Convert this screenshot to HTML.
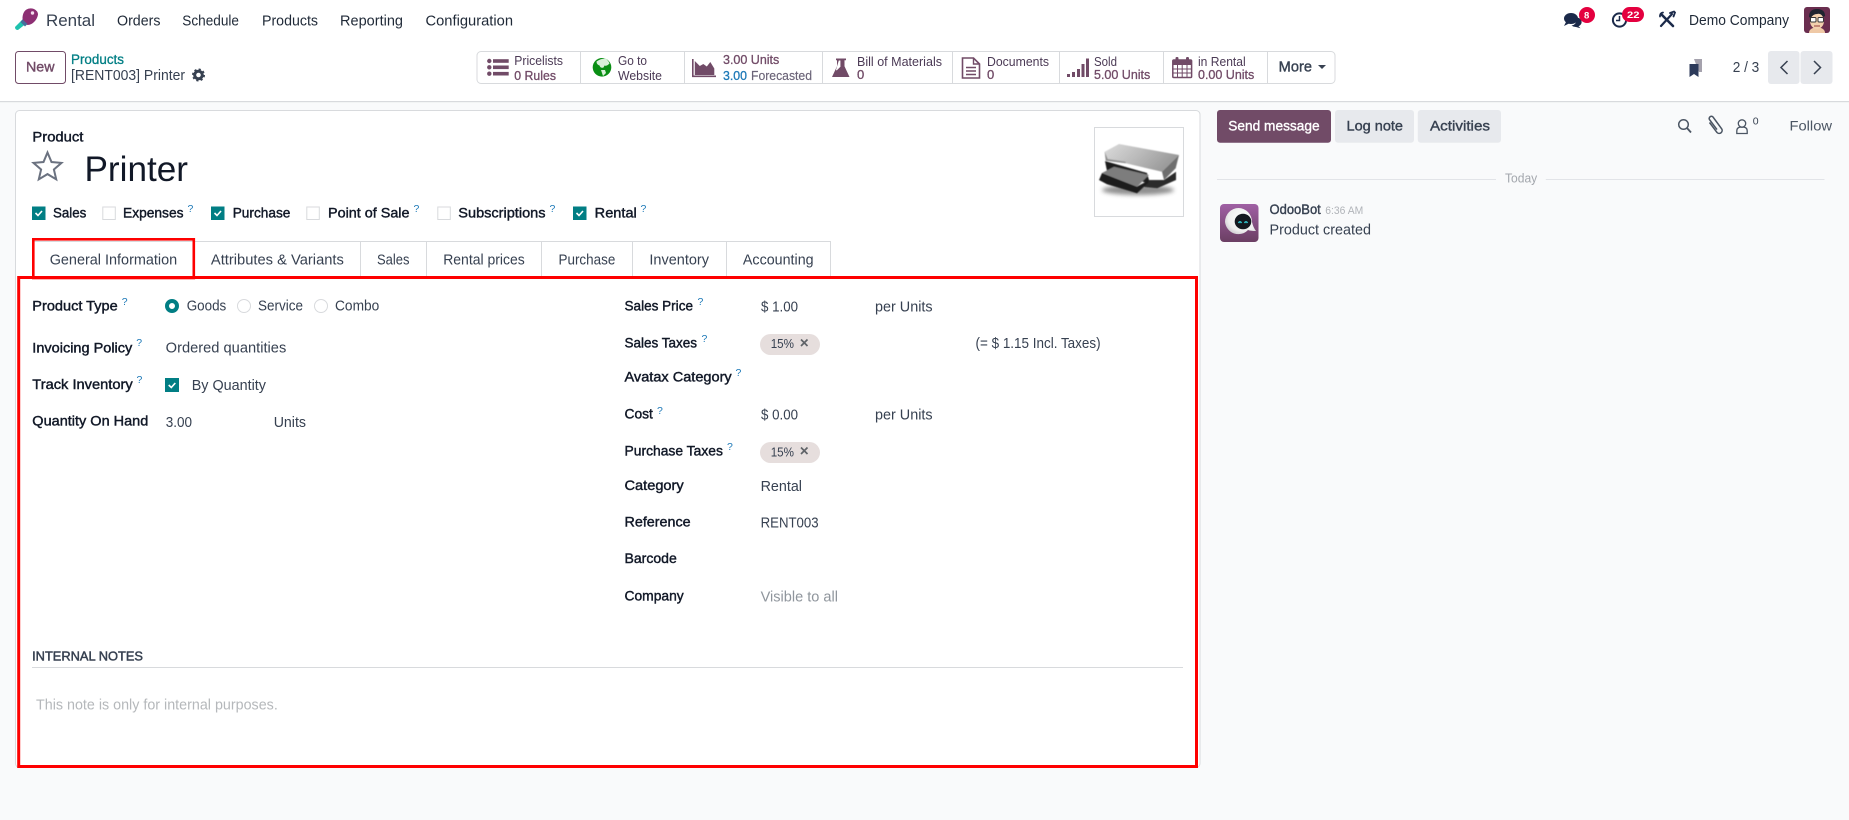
<!DOCTYPE html>
<html lang="en"><head><meta charset="utf-8"><title>Printer</title>
<style>
html,body{margin:0;padding:0;width:1849px;height:820px;overflow:hidden;background:#f9fafb}
svg{display:block}
text{font-family:"Liberation Sans",sans-serif;font-size:14.5px;fill:#374151;white-space:pre}
.n{fill:#1f2937;font-size:14.5px}
.m{fill:currentColor;stroke:currentColor;stroke-width:.38px;font-size:14px}
.b{fill:#111827;stroke:#111827;stroke-width:.42px;font-size:14px}
.s{font-size:13px;fill:#4b3a55}
.sb{font-size:13px;fill:#714b67;stroke:#714b67;stroke-width:.3px}
.q{font-size:10.5px;fill:#1f7ab8}
.g{fill:#8f959c}
.tab{font-size:14.5px;fill:#374151}
</style></head><body>
<svg width="1849" height="820" viewBox="0 0 1849 820" xmlns="http://www.w3.org/2000/svg">
<defs>
<linearGradient id="silver" x1="0" y1="0" x2="1" y2="0.4"><stop offset="0" stop-color="#dcdcdc"/><stop offset=".5" stop-color="#bcbcbc"/><stop offset="1" stop-color="#9a9a9a"/></linearGradient>
<linearGradient id="bot" x1="0" y1="0" x2="0" y2="1"><stop offset="0" stop-color="#a060a4"/><stop offset="1" stop-color="#6b3f63"/></linearGradient>
<radialGradient id="ball" cx=".6" cy=".4" r=".7"><stop offset="0" stop-color="#fff"/><stop offset=".7" stop-color="#eeeeee"/><stop offset="1" stop-color="#c9c5cc"/></radialGradient>
<filter id="blur" x="-30%" y="-80%" width="160%" height="260%"><feGaussianBlur stdDeviation="2.2"/></filter>
<filter id="soft" x="-5%" y="-5%" width="110%" height="110%"><feGaussianBlur stdDeviation=".45"/></filter>
</defs>
<rect width="1849" height="820" fill="#f9fafb"/>
<rect width="1849" height="101" fill="#fff"/>
<rect y="101" width="1849" height="1.2" fill="#d8dadd"/>

<!-- logo -->
<path d="M15 27 L23.500 18.500 L27.500 22.500 L18 30 Q15 30 15 27Z" fill="#1fc2ae"/>
<path d="M26.500 9.500 Q30 7.500 34 9 Q38 11 38 14.500 Q37.500 18 35 21 Q31.500 25 27.500 25 Q24.500 24 23 21 Q22 18 23 14.500 Q24 11 26.500 9.500Z" fill="#8d2f73"/>
<circle cx="32.500" cy="13" r="1.700" fill="#f3dcec"/>
<path d="M22.500 19.500 L27.500 24 L25 26.500 L20.500 22Z" fill="#456e9c"/>
<!-- nav -->
<text x="46" y="26" style="font-size:17px" textLength="49" lengthAdjust="spacingAndGlyphs">Rental</text>
<text class="n" x="117" y="25.300" textLength="43.500" lengthAdjust="spacingAndGlyphs">Orders</text>
<text class="n" x="182.300" y="25.300" textLength="56.700" lengthAdjust="spacingAndGlyphs">Schedule</text>
<text class="n" x="262" y="25.300" textLength="56" lengthAdjust="spacingAndGlyphs">Products</text>
<text class="n" x="340" y="25.300" textLength="63" lengthAdjust="spacingAndGlyphs">Reporting</text>
<text class="n" x="425.500" y="25.300" textLength="87.500" lengthAdjust="spacingAndGlyphs">Configuration</text>

<!-- right top -->
<g fill="#1b2a4a">
<ellipse cx="1571" cy="18.500" rx="7" ry="5.500"/><path d="M1566 22 l-2 4 5-2.500z"/>
<path d="M1577 17.500 a5.500 4.600 0 0 1 1.500 8.700 l2 2 -4.500-1.200 a6 5 0 0 1 -4.500-1.500 q5-.5 5.500-8z"/>
</g>
<circle cx="1587" cy="15" r="8" fill="#e4003f"/>
<text x="1584" y="18.500" style="font-size:9.500px;font-weight:700;fill:#fff">8</text>
<circle cx="1619.500" cy="20" r="6.600" fill="none" stroke="#1b2a4a" stroke-width="2"/>
<path d="M1619.500 16v4.500h-3.500" fill="none" stroke="#1b2a4a" stroke-width="1.500"/>
<rect x="1622" y="7" width="22" height="15" rx="7.500" fill="#e4003f"/>
<text x="1627" y="18" textLength="12.500" lengthAdjust="spacingAndGlyphs" style="font-size:9.500px;font-weight:700;fill:#fff">22</text>
<g stroke="#1b2a4a" stroke-linecap="round" fill="none">
<path d="M1661 26l11-12" stroke-width="2.200"/>
<path d="M1661 14l12 12" stroke-width="2.600"/>
<path d="M1660 16.500a3.500 3.500 0 0 1 3-4" stroke-width="1.800"/>
<path d="M1670 13l4-1.500 1 1-1.500 4" stroke-width="1.800"/>
</g>
<text class="n" x="1689" y="25" textLength="100" lengthAdjust="spacingAndGlyphs">Demo Company</text>
<rect x="1804" y="7" width="26" height="26" rx="3" fill="#6a2e4f"/>
<path d="M1809 33 q0-5 8-6 q8 1 8 6z" fill="#efc9a6"/>
<ellipse cx="1817" cy="21" rx="7" ry="8" fill="#f2d0ae"/>
<path d="M1809 17 q0-8 8-8 q8 0 8 7 l-2 1 q-2-4-6-3 q-4 0-6 4z" fill="#1f2430"/>
<rect x="1810.500" y="17.500" width="5.500" height="4.500" rx="1" fill="#fff" stroke="#333" stroke-width="1"/>
<rect x="1818" y="17.500" width="5.500" height="4.500" rx="1" fill="#fff" stroke="#333" stroke-width="1"/>
<path d="M1814 26h6" stroke="#a5574f" stroke-width="1.200"/>

<!-- control panel left -->
<rect x="15.500" y="51.500" width="50" height="32" rx="3" fill="#fff" stroke="#714b67" stroke-width="1"/>
<text class="m" x="26" y="71.500" textLength="28.500" lengthAdjust="spacingAndGlyphs" style="color:#714b67">New</text>
<text class="m" x="71" y="64" textLength="53" lengthAdjust="spacingAndGlyphs" style="color:#017e84;font-size:13.500px;stroke-width:.3px">Products</text>
<text x="71" y="80" textLength="114" lengthAdjust="spacingAndGlyphs">[RENT003] Printer</text>
<circle cx="198.500" cy="75" r="3.800" fill="none" stroke="#374151" stroke-width="3"/>
<circle cx="198.500" cy="75" r="5.700" fill="none" stroke="#374151" stroke-width="1.600" stroke-dasharray="2.200 2.270"/>

<!-- stat bar -->
<rect x="477" y="51.500" width="858" height="32" rx="4" fill="#fff" stroke="#d8dadd"/>
<path d="M580.500 52v31M684.500 52v31M822.500 52v31M952.500 52v31M1059.500 52v31M1163.500 52v31M1267.500 52v31" stroke="#d8dadd"/>
<!-- pricelist -->
<g fill="#714b67"><circle cx="489.300" cy="61" r="2.200"/><circle cx="489.300" cy="67.300" r="2.200"/><circle cx="489.300" cy="73.700" r="2.200"/>
<rect x="493" y="59.200" width="15.700" height="3.600"/><rect x="493" y="65.500" width="15.700" height="3.600"/><rect x="493" y="71.900" width="15.700" height="3.600"/></g>
<text class="s" x="514.300" y="65" textLength="48.700" lengthAdjust="spacingAndGlyphs">Pricelists</text>
<text class="sb" x="514.300" y="80" textLength="41.700" lengthAdjust="spacingAndGlyphs">0 Rules</text>
<!-- globe -->
<circle cx="602" cy="67.300" r="9.300" fill="#0a8f14"/>
<path d="M596.500 61.500 q4-3 9-3 q3 2 4 5 q-3 3-5 2 l-1 2 q-3 1-4-2 q-3-1-3-4z M601 70 l4 0 l1 3 l-3 3 z" fill="#d8f0d8"/>
<text class="s" x="618" y="65" textLength="29" lengthAdjust="spacingAndGlyphs">Go to</text>
<text class="s" x="618" y="80" textLength="44" lengthAdjust="spacingAndGlyphs">Website</text>
<!-- chart -->
<path d="M692.800 59v17.300h23.200" fill="none" stroke="#714b67" stroke-width="1.600"/>
<path d="M694.800 75v-14l5 5 3.500-2 3.500 2.500 3.500-4.500 4 6.500v6.500z" fill="#714b67"/>
<text class="sb" x="723" y="64" textLength="56.300" lengthAdjust="spacingAndGlyphs">3.00 Units</text>
<text class="m" x="723" y="80" textLength="24" lengthAdjust="spacingAndGlyphs" style="color:#1f7ab8;font-size:13px;stroke-width:.3px">3.00</text>
<text class="m" x="751" y="80" textLength="61" lengthAdjust="spacingAndGlyphs" style="color:#6b6478;font-size:13px;stroke-width:.15px">Forecasted</text>
<!-- flask -->
<path d="M836 58.500h10v1.800h-1.500v6l5 10.700h-17.500l5-10.700v-6h-1z" fill="#714b67"/>
<path d="M838.800 60.500h1.600v6.300l-3.500 3.500h-1z" fill="#fff"/>
<text class="s" x="857" y="66" textLength="85" lengthAdjust="spacingAndGlyphs">Bill of Materials</text>
<text class="sb" x="857" y="79">0</text>
<!-- doc -->
<path d="M962.500 58h11l6 6v14h-17z" fill="none" stroke="#714b67" stroke-width="1.600"/>
<path d="M973.500 58v6h6M966 67.500h10M966 71h10M966 74.500h10" fill="none" stroke="#714b67" stroke-width="1.400"/>
<text class="s" x="987" y="66" textLength="62" lengthAdjust="spacingAndGlyphs">Documents</text>
<text class="sb" x="987" y="79">0</text>
<!-- signal -->
<g fill="#714b67"><rect x="1067" y="74" width="3" height="3"/><rect x="1072" y="72" width="3" height="5"/><rect x="1077" y="69" width="3" height="8"/><rect x="1081.500" y="64" width="3" height="13"/><rect x="1086" y="58.500" width="3" height="18.500"/></g>
<text class="s" x="1094" y="66" textLength="23" lengthAdjust="spacingAndGlyphs">Sold</text>
<text class="sb" x="1094" y="79" textLength="56.300" lengthAdjust="spacingAndGlyphs">5.00 Units</text>
<!-- calendar -->
<rect x="1172.800" y="60" width="18.800" height="17.500" rx="1" fill="none" stroke="#714b67" stroke-width="1.500"/>
<rect x="1172.800" y="60" width="18.800" height="5" fill="#714b67"/>
<rect x="1175.500" y="57" width="3" height="5.500" rx="1.200" fill="#714b67"/><rect x="1186" y="57" width="3" height="5.500" rx="1.200" fill="#714b67"/>
<path d="M1177.500 65v12M1182.200 65v12M1187 65v12M1173 69h18.500M1173 73h18.500" stroke="#714b67" stroke-width="1"/>
<text class="s" x="1198" y="66" textLength="47.700" lengthAdjust="spacingAndGlyphs">in Rental</text>
<text class="sb" x="1198" y="79" textLength="56.300" lengthAdjust="spacingAndGlyphs">0.00 Units</text>
<!-- more -->
<text class="m" x="1278.700" y="71.700" textLength="33.300" lengthAdjust="spacingAndGlyphs" style="color:#374151;font-size:14.500px">More</text>
<path d="M1318 65h8l-4 4z" fill="#374151"/>

<!-- bookmark + pager -->
<path d="M1694 59h8v13h-3z" fill="#a5a2ad"/>
<path d="M1689.500 64h9v13l-4.500-3-4.500 3z" fill="#2c3a5a"/>
<text x="1732.700" y="72" textLength="26.600" lengthAdjust="spacingAndGlyphs">2 / 3</text>
<rect x="1768" y="51" width="31.500" height="33" rx="3" fill="#e7e9ed"/>
<rect x="1800.500" y="51" width="32" height="33" rx="3" fill="#e7e9ed"/>
<path d="M1787.500 61l-6.500 6.500 6.500 6.500M1814 61l6.500 6.500-6.500 6.500" fill="none" stroke="#374151" stroke-width="1.500"/>

<!-- card -->
<rect x="15.500" y="110.500" width="1184.500" height="657" rx="4" fill="#fff" stroke="#d8dadd"/>
<text class="b" x="32.400" y="141.700" textLength="51" lengthAdjust="spacingAndGlyphs">Product</text>
<path d="M47.500 152.500l4 9.500 10 .9-7.600 6.600 2.300 9.800-8.700-5.200-8.700 5.200 2.300-9.800-7.600-6.600 10-.9z" fill="none" stroke="#6b7280" stroke-width="2"/>
<text x="84.500" y="181" textLength="103.500" lengthAdjust="spacingAndGlyphs" style="font-size:35px;fill:#111827">Printer</text>

<!-- image -->
<rect x="1094.500" y="127.500" width="89" height="89" fill="#fff" stroke="#d8dadd"/>
<ellipse cx="1138" cy="190" rx="36" ry="5" fill="#444" opacity=".6" filter="url(#blur)"/>
<g filter="url(#soft)">
<path d="M1149 180l15 0 12-8.300v8.300l-18.700 8.300-13.300-1.300z" fill="#2b2b2b"/>
<path d="M1105 161l42 12 2 7-2 3-40-12z" fill="#1c1c1c"/>
<path d="M1102 173l12-6.300 35 8.300-12 11.700z" fill="#7d7d7d"/>
<path d="M1099 180l3-7 35 13.700 12-6.700-1 3-11 10.300-30-9z" fill="#1f1f1f"/>
<path d="M1104.700 151.700l14.300-7.700 60 11-17 16.700-36.300-8.400-20-2.600z" fill="url(#silver)"/>
<path d="M1162 171.700l17-16.700-3.300 13.300-11.700 11.700z" fill="#6e6e6e"/>
<path d="M1104.700 151.700l1 9 20 2.600 0-1.500-18-2.800z" fill="#8f8f8f"/>
</g>

<!-- check row -->
<rect x="32" y="206.500" width="13.500" height="13.500" fill="#017e84"/><path d="M35.500 213l2.500 2.500 4-4.500" fill="none" stroke="#fff" stroke-width="1.600"/>
<text class="b" x="53" y="217.700" textLength="33.300" lengthAdjust="spacingAndGlyphs">Sales</text>
<rect x="102.800" y="207" width="12.500" height="12.500" fill="#fff" stroke="#d8dadd"/>
<text class="b" x="123" y="217.700" textLength="60.500" lengthAdjust="spacingAndGlyphs">Expenses</text><text class="q" x="187.500" y="212">?</text>
<rect x="211" y="206.500" width="13.500" height="13.500" fill="#017e84"/><path d="M214.500 213l2.500 2.500 4-4.500" fill="none" stroke="#fff" stroke-width="1.600"/>
<text class="b" x="232.700" y="217.700" textLength="57.700" lengthAdjust="spacingAndGlyphs">Purchase</text>
<rect x="306.800" y="207" width="12.500" height="12.500" fill="#fff" stroke="#d8dadd"/>
<text class="b" x="328" y="217.700" textLength="81.500" lengthAdjust="spacingAndGlyphs">Point of Sale</text><text class="q" x="413.500" y="212">?</text>
<rect x="437.800" y="207" width="12.500" height="12.500" fill="#fff" stroke="#d8dadd"/>
<text class="b" x="458.300" y="217.700" textLength="87.200" lengthAdjust="spacingAndGlyphs">Subscriptions</text><text class="q" x="549.500" y="212">?</text>
<rect x="573" y="206.500" width="13.500" height="13.500" fill="#017e84"/><path d="M576.500 213l2.500 2.500 4-4.500" fill="none" stroke="#fff" stroke-width="1.600"/>
<text class="b" x="594.700" y="217.700" textLength="42.100" lengthAdjust="spacingAndGlyphs">Rental</text><text class="q" x="640.500" y="212">?</text>

<!-- tabs -->
<path d="M33.500 276.500V241.500H830.500V276.500M360.500 241.500v35M426.500 241.500v35M541.500 241.500v35M632.500 241.500v35M726.500 241.500v35M194.500 241.500v35" fill="none" stroke="#d8dadd"/>
<text class="tab" x="49.700" y="264.300" textLength="127.500" lengthAdjust="spacingAndGlyphs">General Information</text>
<text class="tab" x="210.900" y="264.300" textLength="133" lengthAdjust="spacingAndGlyphs">Attributes &amp; Variants</text>
<text class="tab" x="377" y="264.300" textLength="32.500" lengthAdjust="spacingAndGlyphs">Sales</text>
<text class="tab" x="443.200" y="264.300" textLength="81.600" lengthAdjust="spacingAndGlyphs">Rental prices</text>
<text class="tab" x="558.500" y="264.300" textLength="56.800" lengthAdjust="spacingAndGlyphs">Purchase</text>
<text class="tab" x="649.400" y="264.300" textLength="59.600" lengthAdjust="spacingAndGlyphs">Inventory</text>
<text class="tab" x="742.900" y="264.300" textLength="70.700" lengthAdjust="spacingAndGlyphs">Accounting</text>

<!-- left group -->
<text class="b" x="32.300" y="310.700" textLength="85.400" lengthAdjust="spacingAndGlyphs">Product Type</text><text class="q" x="121.800" y="305">?</text>
<circle cx="172" cy="306" r="5" fill="#fff" stroke="#017e84" stroke-width="4"/>
<text x="186.700" y="310.700" textLength="39.600" lengthAdjust="spacingAndGlyphs">Goods</text>
<circle cx="244" cy="306" r="6.500" fill="#fff" stroke="#d8dadd"/>
<text x="258" y="310.700" textLength="45" lengthAdjust="spacingAndGlyphs">Service</text>
<circle cx="321" cy="306" r="6.500" fill="#fff" stroke="#d8dadd"/>
<text x="335" y="310.700" textLength="44.300" lengthAdjust="spacingAndGlyphs">Combo</text>

<text class="b" x="32.300" y="352.300" textLength="100" lengthAdjust="spacingAndGlyphs">Invoicing Policy</text><text class="q" x="136.200" y="346">?</text>
<text x="165.700" y="352.700" textLength="120.600" lengthAdjust="spacingAndGlyphs">Ordered quantities</text>

<text class="b" x="32.300" y="389" textLength="100.400" lengthAdjust="spacingAndGlyphs">Track Inventory</text><text class="q" x="136.500" y="383">?</text>
<rect x="165" y="378" width="14" height="14" fill="#017e84"/><path d="M168.700 385l2.600 2.500 4-4.500" fill="none" stroke="#fff" stroke-width="1.600"/>
<text x="191.700" y="390" textLength="74.300" lengthAdjust="spacingAndGlyphs">By Quantity</text>

<text class="b" x="32.300" y="425.700" textLength="116" lengthAdjust="spacingAndGlyphs">Quantity On Hand</text>
<text x="165.700" y="427" textLength="26.300" lengthAdjust="spacingAndGlyphs">3.00</text>
<text x="273.700" y="427" textLength="32.300" lengthAdjust="spacingAndGlyphs">Units</text>

<!-- right group -->
<text class="b" x="624.500" y="310.700" textLength="68.500" lengthAdjust="spacingAndGlyphs">Sales Price</text><text class="q" x="697.500" y="305">?</text>
<text x="761" y="311.700" textLength="37" lengthAdjust="spacingAndGlyphs">$ 1.00</text>
<text x="875" y="311.700" textLength="57.600" lengthAdjust="spacingAndGlyphs">per Units</text>

<text class="b" x="624.500" y="347.700" textLength="72.500" lengthAdjust="spacingAndGlyphs">Sales Taxes</text><text class="q" x="701.500" y="342">?</text>
<rect x="760" y="334" width="60" height="21" rx="10.500" fill="#e6dedd"/>
<text x="770.700" y="348" textLength="23.300" lengthAdjust="spacingAndGlyphs" style="font-size:13px">15%</text>
<path d="M801 339.500l6.500 6.500M807.500 339.500l-6.500 6.500" stroke="#5f6368" stroke-width="1.700"/>
<text x="975.500" y="348" textLength="125.100" lengthAdjust="spacingAndGlyphs">(= $ 1.15 Incl. Taxes)</text>

<text class="b" x="624.500" y="381.700" textLength="107.200" lengthAdjust="spacingAndGlyphs">Avatax Category</text><text class="q" x="735.500" y="376">?</text>

<text class="b" x="624.500" y="418.700" textLength="28.400" lengthAdjust="spacingAndGlyphs">Cost</text><text class="q" x="657" y="414">?</text>
<text x="761" y="419.700" textLength="37" lengthAdjust="spacingAndGlyphs">$ 0.00</text>
<text x="875" y="419.700" textLength="57.600" lengthAdjust="spacingAndGlyphs">per Units</text>

<text class="b" x="624.500" y="455.700" textLength="98.400" lengthAdjust="spacingAndGlyphs">Purchase Taxes</text><text class="q" x="727" y="450">?</text>
<rect x="760" y="442" width="60" height="21" rx="10.500" fill="#e6dedd"/>
<text x="770.700" y="456.700" textLength="23.300" lengthAdjust="spacingAndGlyphs" style="font-size:13px">15%</text>
<path d="M801 447.500l6.500 6.500M807.500 447.500l-6.500 6.500" stroke="#5f6368" stroke-width="1.700"/>

<text class="b" x="624.500" y="490" textLength="59.200" lengthAdjust="spacingAndGlyphs">Category</text>
<text x="760.600" y="491" textLength="41.400" lengthAdjust="spacingAndGlyphs">Rental</text>
<text class="b" x="624.500" y="526.700" textLength="66.100" lengthAdjust="spacingAndGlyphs">Reference</text>
<text x="760.600" y="527.700" textLength="58" lengthAdjust="spacingAndGlyphs">RENT003</text>
<text class="b" x="624.500" y="563" textLength="52.300" lengthAdjust="spacingAndGlyphs">Barcode</text>
<text class="b" x="624.500" y="600.700" textLength="59.200" lengthAdjust="spacingAndGlyphs">Company</text>
<text class="g" x="760.600" y="601.300" textLength="77.400" lengthAdjust="spacingAndGlyphs">Visible to all</text>

<text class="m" x="32.100" y="660.700" textLength="110.900" lengthAdjust="spacingAndGlyphs" style="color:#374151;font-size:12.500px;stroke-width:.45px">INTERNAL NOTES</text>
<rect x="32" y="667" width="1151" height="1" fill="#d8dadd"/>
<text x="36" y="709.300" textLength="241.800" lengthAdjust="spacingAndGlyphs" style="fill:#b5b8bb">This note is only for internal purposes.</text>

<!-- red annotations -->
<rect x="18.700" y="277.500" width="1177.800" height="489" fill="none" stroke="#fe0000" stroke-width="3"/>
<rect x="33.300" y="239.300" width="160.500" height="38.700" fill="none" stroke="#fe0000" stroke-width="2.600"/>

<!-- chatter -->
<rect x="1217" y="110" width="114" height="32.700" rx="3" fill="#714b67"/>
<text class="m" x="1228.300" y="130.700" textLength="91.300" lengthAdjust="spacingAndGlyphs" style="color:#fff">Send message</text>
<rect x="1335" y="110" width="79" height="32.700" rx="3" fill="#e7e9ed"/>
<text class="m" x="1346.500" y="130.700" textLength="56.500" lengthAdjust="spacingAndGlyphs" style="color:#374151">Log note</text>
<rect x="1417.800" y="110" width="83.200" height="32.700" rx="3" fill="#e7e9ed"/>
<text class="m" x="1430" y="130.700" textLength="60" lengthAdjust="spacingAndGlyphs" style="color:#374151">Activities</text>

<circle cx="1683.500" cy="124.500" r="4.800" fill="none" stroke="#4b5563" stroke-width="1.500"/>
<path d="M1687 128l4 4.500" stroke="#4b5563" stroke-width="1.800"/>
<path d="M1709.500 122.500l7.500 10a3 3 0 0 0 4.800-3.500l-8.800-12a2.200 2.200 0 0 0-3.500 2.600l7.500 10" fill="none" stroke="#4b5563" stroke-width="1.500"/>
<circle cx="1742" cy="123.500" r="3.700" fill="none" stroke="#4b5563" stroke-width="1.300"/>
<path d="M1736.800 133.500v-2.500q0-3.500 3.400-3.900h3.600q3.400 .4 3.400 3.900v2.500z" fill="none" stroke="#4b5563" stroke-width="1.300"/>
<text x="1752.700" y="124.500" style="font-size:10.500px;fill:#374151">0</text>
<text x="1789.500" y="130.700" textLength="42.500" lengthAdjust="spacingAndGlyphs" style="font-size:14px;fill:#4b5563">Follow</text>

<rect x="1217" y="179" width="279" height="1" fill="#e2e4e8"/>
<rect x="1545.800" y="179" width="278.700" height="1" fill="#e2e4e8"/>
<text x="1505" y="182.700" textLength="32.200" lengthAdjust="spacingAndGlyphs" style="font-size:12.500px;fill:#a3a7ad">Today</text>

<rect x="1220" y="204" width="38.500" height="38" rx="4" fill="url(#bot)"/>
<path d="M1225 222 a13.500 14 0 0 1 27 0 q1 5 4 9 q-5 0 -8 -1 a13.500 14 0 0 1 -23 -8z" fill="url(#ball)"/>
<ellipse cx="1243" cy="221.500" rx="8.300" ry="7.800" fill="#14181f"/>
<path d="M1238.500 223q1.500-2.500 3 0M1244.500 223q1.500-2.500 3 0" fill="none" stroke="#2fc4cc" stroke-width="1.500"/>

<text class="m" x="1269.500" y="214" textLength="51.300" lengthAdjust="spacingAndGlyphs" style="color:#374151;font-size:13.500px">OdooBot</text>
<text x="1325.300" y="214" textLength="37.900" lengthAdjust="spacingAndGlyphs" style="font-size:11px;fill:#b0b3b8">6:36 AM</text>
<text x="1269.500" y="234.300" textLength="101.500" lengthAdjust="spacingAndGlyphs">Product created</text>
</svg>
</body></html>
